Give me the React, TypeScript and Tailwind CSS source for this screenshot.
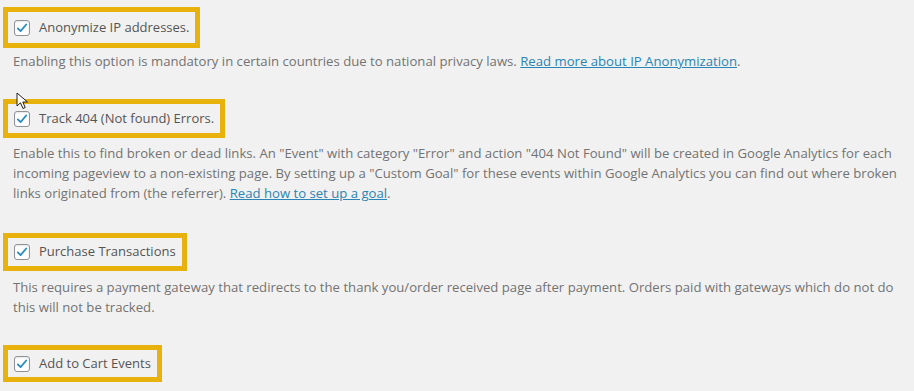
import React from "react";

const font = { fontFamily: '"Open Sans", "Noto Sans", Arial, sans-serif' };

function Check() {
  return (
    <span className="flex h-[16px] w-[16px] shrink-0 items-center justify-center rounded-[3px] border border-[#8f9396] bg-white shadow-[inset_0_1px_2px_rgba(0,0,0,0.1)]">
      <svg width="14" height="14" viewBox="0 0 20 20">
        <path d="M4 10.5 L8 14.5 L16 5" fill="none" stroke="#2a8cc5" strokeWidth="2.6" strokeLinecap="round" strokeLinejoin="round" />
      </svg>
    </span>
  );
}

function Box({ label, h }: { label: string; h: string }) {
  return (
    <div className={`ml-[3px] inline-flex items-center gap-[9px] border-[5px] border-[#e9b10c] pl-[6px] pr-[6px] ${h}`}>
      <Check />
      <span className="whitespace-nowrap text-[13px] text-[#555]">{label}</span>
    </div>
  );
}

export default function App() {
  return (
    <div className="relative h-[391px] w-[914px] overflow-hidden bg-[#f1f1f1]" style={font}>
      <div className="flex flex-col pt-[7px]">
        <div className="flex"><Box label="Anonymize IP addresses." h="h-[41px]" /></div>
        <p className="ml-[13px] mt-[3px] whitespace-nowrap text-[13.15px] leading-[20px] text-[#737373]">
          Enabling this option is mandatory in certain countries due to national privacy laws.{" "}
          <a className="text-[#2a84b5] underline">Read more about IP Anonymization</a>.
        </p>
        <div className="mt-[28px] flex"><Box label="Track 404 (Not found) Errors." h="h-[39px]" /></div>
        <p className="ml-[13px] mt-[5px] whitespace-nowrap text-[13.15px] leading-[20px] text-[#737373]">
          <span className="block">Enable this to find broken or dead links. An "Event" with category "Error" and action "404 Not Found" will be created in Google Analytics for each</span>
          <span className="block">incoming pageview to a non-existing page. By setting up a "Custom Goal" for these events within Google Analytics you can find out where broken</span>
          <span className="block">links originated from (the referrer). <a className="text-[#2a84b5] underline">Read how to set up a goal</a>.</span>
        </p>
        <div className="mt-[30px] flex"><Box label="Purchase Transactions" h="h-[38px]" /></div>
        <p className="ml-[13px] mt-[6px] whitespace-nowrap text-[13.15px] leading-[20px] text-[#737373]">
          <span className="block">This requires a payment gateway that redirects to the thank you/order received page after payment. Orders paid with gateways which do not do</span>
          <span className="block">this will not be tracked.</span>
        </p>
        <div className="mt-[28px] flex"><Box label="Add to Cart Events" h="h-[37px]" /></div>
      </div>
      <svg className="absolute left-[16px] top-[92px]" width="14" height="18" viewBox="0 0 14 18">
        <path d="M1 1 L1 14 L4.5 10.8 L7 16.5 L9.2 15.5 L6.8 10 L11.5 10 Z" fill="#fff" stroke="#222" strokeWidth="1" strokeLinejoin="round" />
      </svg>
    </div>
  );
}
